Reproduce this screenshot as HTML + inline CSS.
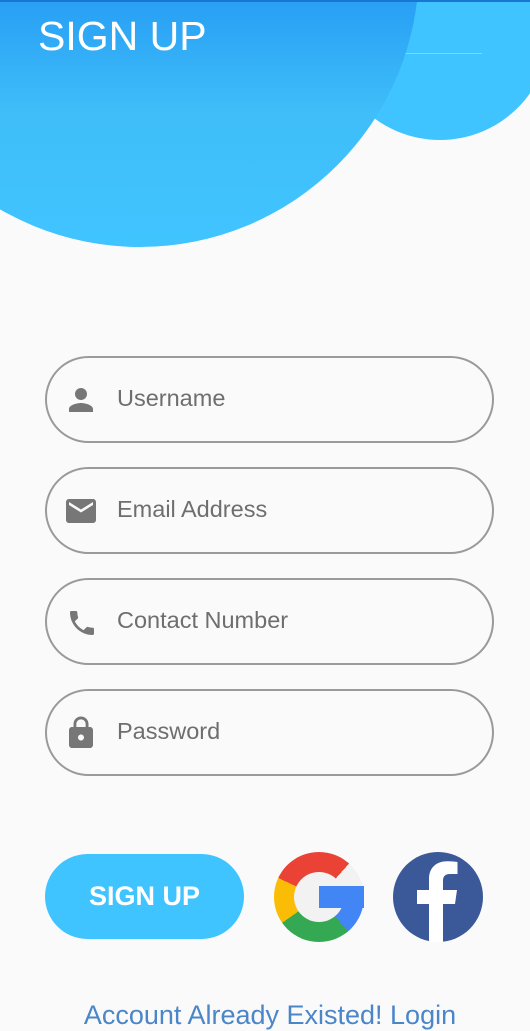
<!DOCTYPE html>
<html><head><meta charset="utf-8"><style>
*{margin:0;padding:0;box-sizing:border-box}
body{width:530px;height:1027px;overflow:hidden;background:#fafafa;position:relative;font-family:"Liberation Sans",Roboto,sans-serif}
.c{position:absolute;border-radius:50%}
.field{position:absolute;left:45px;width:449px;height:87px;border:2px solid #9a9a9a;border-radius:44px}
.field svg{position:absolute;left:16px;top:24px;width:36px;height:36px}
.field span{position:absolute;left:70px;top:0;line-height:81px;font-size:23.5px;color:#6e6e6e}
</style></head><body>
<div class="c" style="left:330px;top:-80px;width:220px;height:220px;background:#40c4ff"></div>
<div style="position:absolute;left:400px;top:53px;width:82px;height:1px;background:#7fd6ff"></div>
<div class="c" style="left:-139px;top:-311px;width:558px;height:558px;background:linear-gradient(to bottom,#1e88e5 0%,#2196f3 50%,#3fbef9 76%,#40c4ff 100%)"></div>
<div style="position:absolute;left:0;top:0;width:530px;height:2px;background:#1976d2"></div>
<div style="position:absolute;left:38px;top:13px;font-size:41px;color:#fff">SIGN UP</div>

<div class="field" style="top:356px"><svg viewBox="0 0 24 24"><path fill="#777" d="M12 12c2.21 0 4-1.79 4-4s-1.79-4-4-4-4 1.79-4 4 1.79 4 4 4zm0 2c-2.67 0-8 1.34-8 4v2h16v-2c0-2.66-5.330-4-8-4z"/></svg><span>Username</span></div>
<div class="field" style="top:467px"><svg viewBox="0 0 24 24"><path fill="#777" d="M20 4H4c-1.1 0-2 .9-2 2v12c0 1.1.9 2 2 2h16c1.1 0 2-.9 2-2V6c0-1.1-.9-2-2-2zm0 4l-8 5-8-5V6l8 5 8-5v2z"/></svg><span>Email Address</span></div>
<div class="field" style="top:578px"><svg viewBox="0 0 24 24" style="left:19px;top:27px;width:32px;height:32px"><path fill="#777" d="M6.62 10.79c1.44 2.830 3.76 5.14 6.59 6.59l2.2-2.2c.27-.27.67-.36 1.02-.24 1.12.37 2.33.57 3.57.57.55 0 1 .45 1 1V20c0 .55-.45 1-1 1-9.39 0-17-7.61-17-17 0-.55.45-1 1-1h3.5c.55 0 1 .45 1 1 0 1.25.2 2.45.57 3.57.11.35.03.74-.25 1.020l-2.2 2.2z"/></svg><span>Contact Number</span></div>
<div class="field" style="top:689px"><svg viewBox="0 0 24 24"><path fill="#777" d="M18 8h-1V6c0-2.76-2.24-5-5-5S7 3.24 7 6v2H6c-1.1 0-2 .9-2 2v10c0 1.1.9 2 2 2h12c1.1 0 2-.9 2-2V10c0-1.1-.9-2-2-2zm-6 9c-1.1 0-2-.9-2-2s.9-2 2-2 2 .9 2 2-.9 2-2 2zm3.1-9H8.9V6c0-1.71 1.39-3.1 3.1-3.1 1.71 0 3.1 1.39 3.1 3.1v2z"/></svg><span>Password</span></div>

<div style="position:absolute;left:45px;top:854px;width:199px;height:85px;border-radius:43px;background:#40c4ff;color:#fff;font-weight:bold;font-size:27px;line-height:85px;text-align:center">SIGN UP</div>

<div class="c" style="left:274px;top:852px;width:90px;height:90px;background:conic-gradient(from 0deg,#ea4335 0deg 42deg,#f2f2f2 42deg 90deg,#4285f4 90deg 140deg,#34a853 140deg 235deg,#fbbc05 235deg 295deg,#ea4335 295deg 360deg)"></div>
<div class="c" style="left:294px;top:872px;width:50px;height:50px;background:#f2f2f2"></div>
<div style="position:absolute;left:319px;top:886px;width:45px;height:22px;background:#4285f4"></div>

<svg style="position:absolute;left:393px;top:852px" width="90" height="90" viewBox="0 0 90 90">
<circle cx="45" cy="45" r="45" fill="#3b5998"/>
<path fill="#fff" d="M50 90V52h12l2-14H50v-9c0-4 1.5-7 7-7h7.5V10c-2-.3-6-.8-10.5-.8-10 0-18 6-18 17.5V38H24v14h12v38z"/>
</svg>

<div style="position:absolute;left:0;width:540px;top:1000px;text-align:center;font-size:27px;color:#4a86c8">Account Already Existed! Login</div>
</body></html>
